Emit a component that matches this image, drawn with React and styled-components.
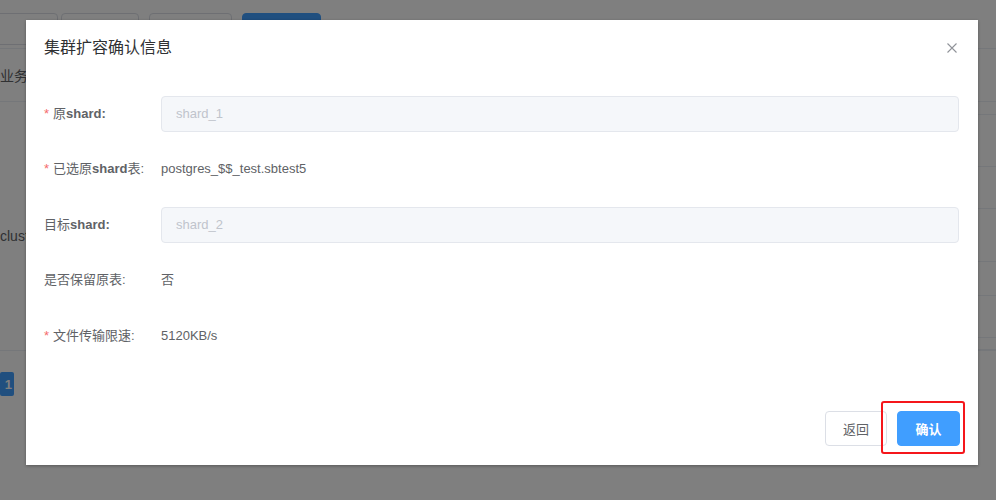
import styled, { createGlobalStyle } from "styled-components";

const GlobalStyle = createGlobalStyle`
  html, body {
    margin: 0;
    padding: 0;
    background: #fff;
    font-family: "Liberation Sans", "Noto Sans CJK SC", sans-serif;
  }
  * { box-sizing: border-box; }
`;

const Page = styled.div`
  width: 996px;
  height: 500px;
  overflow: hidden;
  position: relative;
  background: #fff;
  color: #606266;
  font-size: 13px;
`;

const Toolbar = styled.div`
  display: flex;
  padding-top: 13px;
  height: 48px;
  margin-left: -20px;
`;

const PageButton = styled.div`
  height: 32px;
  width: ${(p) => p.$w}px;
  margin-left: ${(p) => p.$gap || 0}px;
  border: 1px solid ${(p) => (p.$primary ? "#409eff" : "#dcdfe6")};
  background: ${(p) => (p.$primary ? "#409eff" : "#fff")};
  border-radius: 4px;
`;

const FilterBar = styled.div`
  height: 54px;
  border-top: 1px solid #ebeef5;
  border-bottom: 1px solid #ebeef5;
  display: flex;
  align-items: center;
  font-size: 14px;
`;

const Clipped = styled.span`
  width: 26px;
  overflow: hidden;
  white-space: nowrap;
`;

const Table = styled.div`
  margin-top: 12px;
  border-bottom: 1px solid #ebeef5;
`;

const TableRow = styled.div`
  height: ${(p) => p.$h}px;
  display: grid;
  grid-template-columns: 1fr 5px 30px;
  font-size: 14px;
`;

const NameCell = styled.div`
  display: flex;
  align-items: center;
`;

const SideCell = styled.div`
  border-top: ${(p) => (p.$top ? "1px solid #ebeef5" : "none")};
  border-bottom: 1px solid #ebeef5;
  border-left: ${(p) => (p.$divider ? "1px solid #ebeef5" : "none")};
`;

const Pager = styled.div`
  margin-top: 21px;
  width: 14px;
  height: 24px;
  background: #409eff;
  border-radius: 2px;
  color: #fff;
  font-weight: bold;
  font-size: 13px;
  display: flex;
  align-items: center;
  justify-content: flex-end;
  padding-right: 2px;
`;

const Mask = styled.div`
  position: absolute;
  inset: 0;
  background: rgba(0, 0, 0, 0.5);
  padding: 20px 0 0 26px;
`;

const Dialog = styled.div`
  width: 952px;
  height: 445px;
  background: #fff;
  box-shadow: 0 1px 3px rgba(0, 0, 0, 0.3);
  display: flex;
  flex-direction: column;
`;

const Header = styled.div`
  display: flex;
  justify-content: space-between;
  align-items: center;
  padding: 16px 21px 0 18px;
  height: 40px;
`;

const Title = styled.span`
  font-size: 16px;
  line-height: 24px;
  color: #303133;
`;

const Close = styled.button`
  border: none;
  background: none;
  padding: 0;
  width: 10px;
  height: 10px;
  display: flex;
  cursor: pointer;
`;

const Body = styled.div`
  padding: 36px 19px 0 18px;
  display: flex;
  flex-direction: column;
  gap: 19.5px;
`;

const Row = styled.div`
  display: grid;
  grid-template-columns: 117px 1fr;
  align-items: center;
  height: 36px;
`;

const Label = styled.label`
  font-size: 13px;
  line-height: 16px;
  margin-top: -1px;
  color: #606266;
  white-space: nowrap;
`;

const Star = styled.span`
  color: #f56c6c;
  margin-right: 4px;
`;

const Latin = styled.b`
  font-weight: bold;
`;

const Value = styled.span`
  font-size: 13px;
  line-height: 16px;
  margin-top: -1px;
  color: #606266;
`;

const Input = styled.input`
  height: 36px;
  width: 100%;
  background: #f5f7fa;
  border: 1px solid #e4e7ed;
  border-radius: 4px;
  padding: 0 14px 1px;
  font-family: inherit;
  font-size: 13px;
  color: #c0c4cc;
  outline: none;
`;

const Footer = styled.div`
  margin-top: auto;
  display: flex;
  justify-content: flex-end;
  gap: 10px;
  padding: 0 18px 19px;
`;

const Button = styled.button`
  position: relative;
  height: 35px;
  width: ${(p) => p.$w}px;
  border-radius: 4px;
  font-family: inherit;
  font-size: 13px;
  border: 1px solid ${(p) => (p.$primary ? "#409eff" : "#dcdfe6")};
  background: ${(p) => (p.$primary ? "#409eff" : "#fff")};
  color: ${(p) => (p.$primary ? "#fff" : "#606266")};
  font-weight: ${(p) => (p.$primary ? "bold" : "normal")};
`;

const Highlight = styled.span`
  position: absolute;
  top: -11px;
  bottom: -9px;
  left: -17px;
  right: -6px;
  border: 2px solid #f5161b;
  border-radius: 3px;
  pointer-events: none;
`;

const tableRows = [
  { h: 53, top: true },
  { h: 42, divider: true },
  { h: 53, divider: true, name: "cluster_1" },
  { h: 34, divider: true },
  { h: 42, divider: true },
  { h: 12 },
];

const App = () => {
  return (
    <Page>
      <GlobalStyle />
      <Toolbar>
        <PageButton $w={78} />
        <PageButton $w={78} $gap={3} />
        <PageButton $w={83} $gap={10} />
        <PageButton $w={79} $gap={10} $primary />
      </Toolbar>
      <FilterBar>
        <Clipped>业务名称</Clipped>
      </FilterBar>
      <Table>
        {tableRows.map((r, i) => (
          <TableRow key={i} $h={r.h}>
            <NameCell>{r.name && <Clipped>{r.name}</Clipped>}</NameCell>
            <SideCell $top={r.top} />
            <SideCell $top={r.top} $divider={r.divider} />
          </TableRow>
        ))}
      </Table>
      <Pager>1</Pager>

      <Mask>
        <Dialog>
          <Header>
            <Title>集群扩容确认信息</Title>
            <Close aria-label="close">
              <svg width="10" height="10" viewBox="0 0 10 10">
                <path d="M0.5 0.5 L9.5 9.5 M9.5 0.5 L0.5 9.5" stroke="#909399" strokeWidth="1.1" />
              </svg>
            </Close>
          </Header>
          <Body>
            <Row>
              <Label>
                <Star>*</Star>原<Latin>shard:</Latin>
              </Label>
              <Input value="shard_1" disabled readOnly />
            </Row>
            <Row>
              <Label>
                <Star>*</Star>已选原<Latin>shard</Latin>表:
              </Label>
              <Value>postgres_$$_test.sbtest5</Value>
            </Row>
            <Row>
              <Label>
                目标<Latin>shard:</Latin>
              </Label>
              <Input value="shard_2" disabled readOnly />
            </Row>
            <Row>
              <Label>是否保留原表:</Label>
              <Value>否</Value>
            </Row>
            <Row>
              <Label>
                <Star>*</Star>文件传输限速:
              </Label>
              <Value>5120KB/s</Value>
            </Row>
          </Body>
          <Footer>
            <Button $w={62}>返回</Button>
            <Button $w={63} $primary>
              确认
              <Highlight />
            </Button>
          </Footer>
        </Dialog>
      </Mask>
    </Page>
  );
};

export default App;
